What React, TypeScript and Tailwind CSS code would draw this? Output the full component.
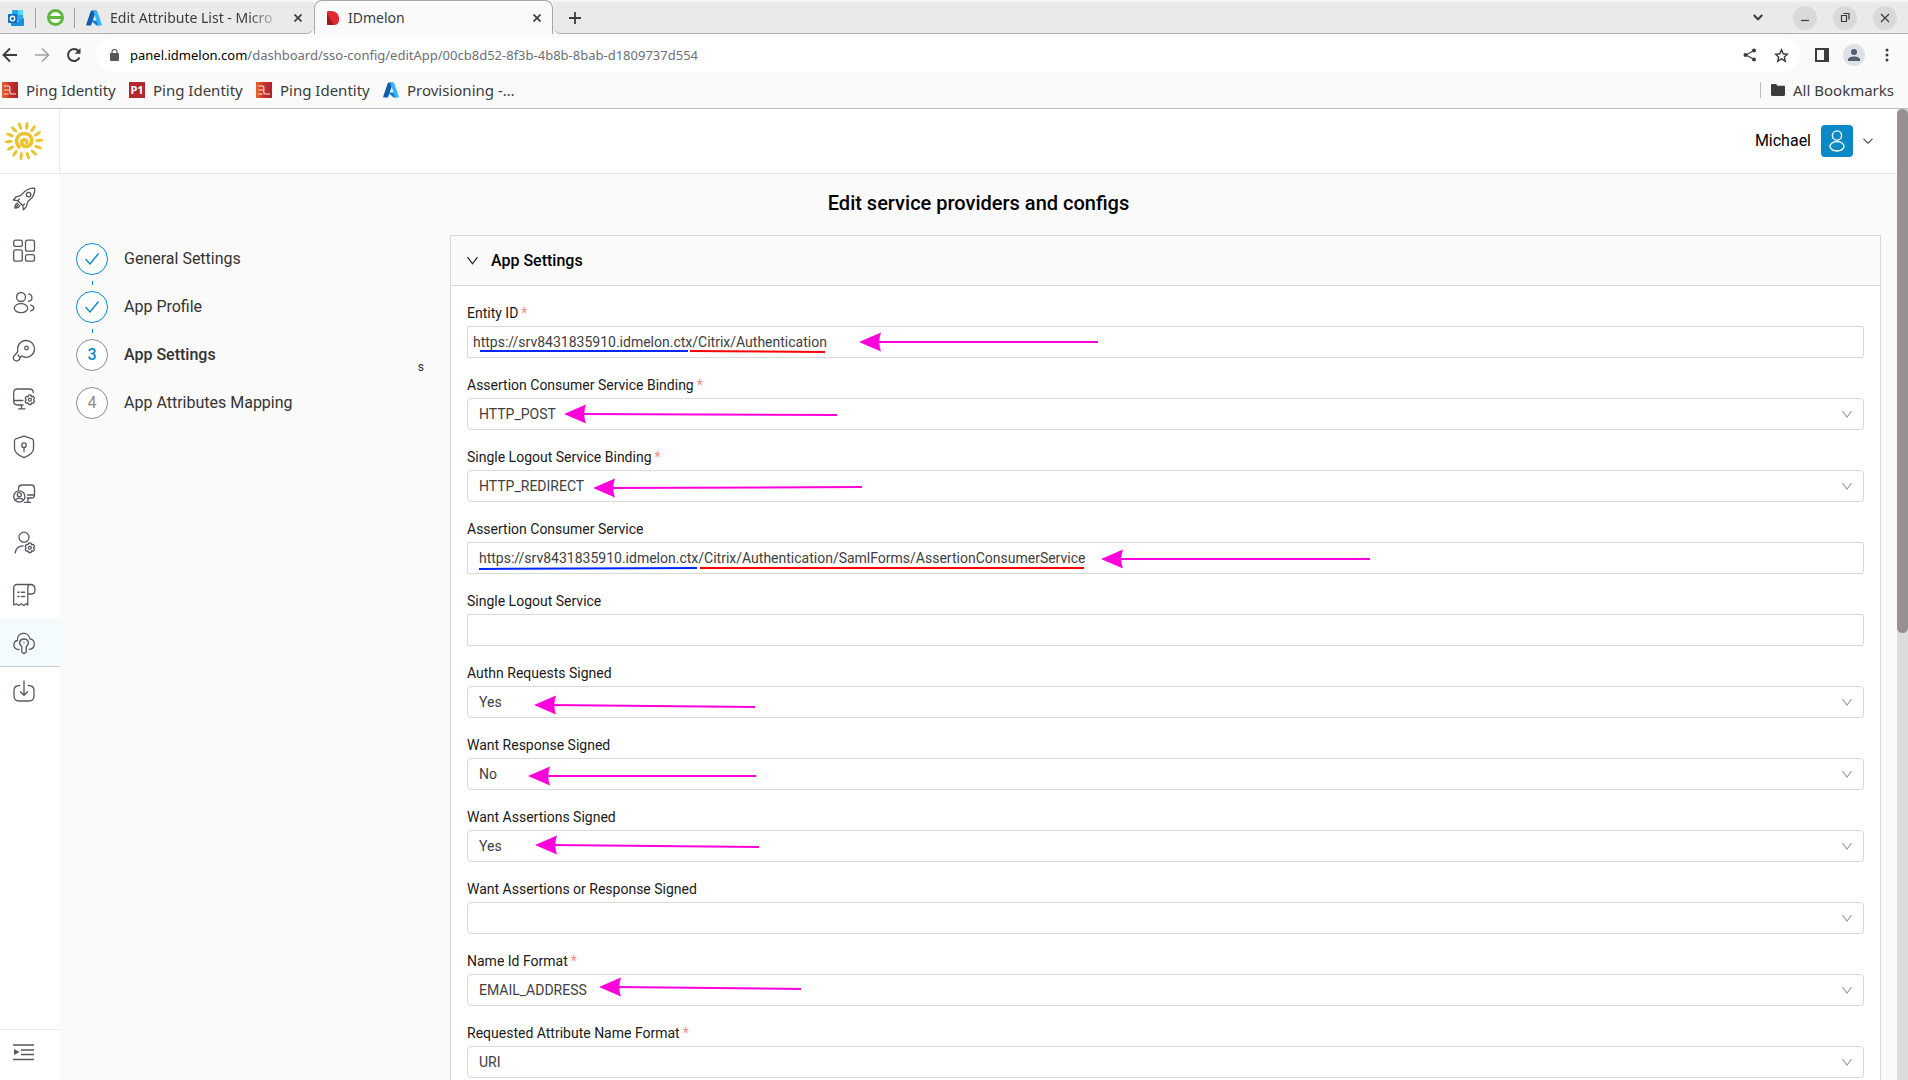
import React from "react";

type Line = { x1: number; y1: number; x2: number; y2: number; color: string };
type Arrow = { tip: number; tipY: number; end: number; endY: number };
type Field = {
  id: string;
  label: string;
  kind: "text" | "select";
  value: string;
  required?: boolean;
  pad?: string;
  arrow?: Arrow;
  lines?: Line[];
};

const BLUE = "#0026ff";
const RED = "#ff0000";

/* Annotation coordinates are measured from the top left corner of each field's box. */
const fields: Field[] = [
  {
    id: "entity-id",
    label: "Entity ID",
    kind: "text",
    value: "https://srv8431835910.idmelon.ctx/Citrix/Authentication",
    required: true,
    pad: "pl-[5px]",
    arrow: { tip: 392, tipY: 16, end: 631, endY: 16 },
    lines: [
      { x1: 13, y1: 25, x2: 221, y2: 25, color: BLUE },
      { x1: 223, y1: 25, x2: 358, y2: 26, color: RED },
    ],
  },
  {
    id: "acs-binding",
    label: "Assertion Consumer Service Binding",
    kind: "select",
    value: "HTTP_POST",
    required: true,
    arrow: { tip: 97, tipY: 16, end: 370, endY: 17 },
  },
  {
    id: "slo-binding",
    label: "Single Logout Service Binding",
    kind: "select",
    value: "HTTP_REDIRECT",
    required: true,
    arrow: { tip: 126, tipY: 18, end: 395, endY: 17 },
  },
  {
    id: "acs",
    label: "Assertion Consumer Service",
    kind: "text",
    value: "https://srv8431835910.idmelon.ctx/Citrix/Authentication/SamlForms/AssertionConsumerService",
    arrow: { tip: 634, tipY: 17, end: 903, endY: 17 },
    lines: [
      { x1: 12, y1: 27, x2: 230, y2: 26, color: BLUE },
      { x1: 233, y1: 26, x2: 617, y2: 26, color: RED },
    ],
  },
  { id: "slo", label: "Single Logout Service", kind: "text", value: "" },
  {
    id: "authn-signed",
    label: "Authn Requests Signed",
    kind: "select",
    value: "Yes",
    arrow: { tip: 67, tipY: 19, end: 288, endY: 21 },
  },
  {
    id: "response-signed",
    label: "Want Response Signed",
    kind: "select",
    value: "No",
    arrow: { tip: 61, tipY: 18, end: 289, endY: 18 },
  },
  {
    id: "assertions-signed",
    label: "Want Assertions Signed",
    kind: "select",
    value: "Yes",
    arrow: { tip: 68, tipY: 15, end: 292, endY: 17 },
  },
  { id: "either-signed", label: "Want Assertions or Response Signed", kind: "select", value: "" },
  {
    id: "name-id",
    label: "Name Id Format",
    kind: "select",
    value: "EMAIL_ADDRESS",
    required: true,
    arrow: { tip: 132, tipY: 13, end: 334, endY: 15 },
  },
  {
    id: "attr-format",
    label: "Requested Attribute Name Format",
    kind: "select",
    value: "URI",
    required: true,
  },
];

const GEAR =
  "M17.5 12 l1.5 .1 .6 1.6 1.7 -.3 1.2 1.9 -1 1.5 1 1.5 -1.2 1.9 -1.7 -.3 -.6 1.6 h-2.3 l-.7 -1.6 -1.7 .3 -1.1 -1.9 1 -1.5 -1 -1.5 1.1 -1.9 1.7 .3 .7 -1.6z";

function Icon({ children, size = 24 }: { children: React.ReactNode; size?: number }) {
  return (
    <svg
      width={size}
      height={size}
      viewBox="0 0 24 24"
      fill="none"
      stroke="currentColor"
      strokeWidth="1.3"
      strokeLinecap="round"
      strokeLinejoin="round"
      aria-hidden="true"
    >
      {children}
    </svg>
  );
}

const navItems: { name: string; gap?: boolean; active?: boolean; icon: React.ReactNode }[] = [
  {
    name: "Get started",
    gap: true,
    icon: (
      <>
        <path d="M22.7 1.2C17 1 13.500 3.200 10.500 6.700L9 8.400 4.200 9.800 1.300 13l4.400.7 5 4.800.8 4.300 2.800-3.200 1.600-5 2.200-2C21.500 9.600 23 6.200 22.700 1.200z" />
        <circle cx="16.600" cy="7.600" r="2.300" />
        <path d="M5.800 13.800l1.500-1.800M10.800 18.400l1.800-1.400M5.500 16.200c-1.700.6-2.500 2.200-2.600 4.800 2.500 0 4.300-.8 4.900-2.500M4.500 19.500l2-2" />
      </>
    ),
  },
  {
    name: "Dashboard",
    gap: true,
    icon: (
      <>
        <rect x="1.700" y="1.200" width="8.600" height="6.200" rx="2" />
        <rect x="13.500" y="1.200" width="9" height="11" rx="2" />
        <rect x="1.700" y="10.800" width="8.600" height="11.400" rx="2" />
        <rect x="13.500" y="15.600" width="9" height="6.600" rx="2" />
      </>
    ),
  },
  {
    name: "Users",
    icon: (
      <>
        <circle cx="9" cy="6" r="4.500" />
        <ellipse cx="9" cy="17.200" rx="6.700" ry="4.500" />
        <path d="M16.500 3.200c4.600.3 4.600 6.800 0 7M18.600 14.200c4.300.9 4.300 4.700 0 5.700" />
      </>
    ),
  },
  {
    name: "Keys",
    icon: (
      <>
        <path d="M5.800 12.500C4.600 6.500 8.500 1.500 14 1.500c5 0 8.500 3.800 8.500 8.200 0 5.500-5 9.800-10.700 8.300L10 16.800 8 18.500l-.5 2.200-3 1.500-2.700-1.500-.5-2.700z" />
        <circle cx="14.500" cy="9" r="1.800" />
        <path d="M6 16l2 2.300" />
      </>
    ),
  },
  {
    name: "Workstations",
    icon: (
      <>
        <path d="M11 18H5.500c-2.500 0-3.800-1.200-3.800-3.700V5.500C1.700 3 3 2 5.500 2h12c2.500 0 3.700 1 3.700 3.500M1.800 13.500h9M9.500 18v3.800M6.500 21.800h6.500" />
        <path d={GEAR} transform="translate(0 -4)" />
        <circle cx="17.900" cy="12.700" r="1.500" />
      </>
    ),
  },
  {
    name: "Security",
    icon: (
      <>
        <path d="M12 1.200l8.200 2.600c1 .5 1.300 1.300 1.300 2.500v7.200c0 4.200-5 7.300-9.500 9.100-4.500-1.800-9.500-4.900-9.500-9.100V6.300c0-1.200.4-2 1.300-2.500z" />
        <circle cx="12" cy="10.200" r="2.300" />
        <path d="M12 12.500v4" />
      </>
    ),
  },
  {
    name: "Sessions",
    icon: (
      <>
        <path d="M6.500 7V5.500C6.500 3 7.800 2 10 2h9.200c2.200 0 3.300 1 3.300 3.300v6.400c0 2.200-1.100 3.300-3.300 3.300H15M15.500 12h6.700M16 15v4M12.500 19.300h6" />
        <circle cx="7.300" cy="13.500" r="5.600" />
        <circle cx="7.300" cy="11.700" r="2" />
        <path d="M3.500 17.300c1-3 6.600-3 7.600 0" />
      </>
    ),
  },
  {
    name: "Administrators",
    gap: true,
    icon: (
      <>
        <circle cx="12" cy="6.200" r="5" />
        <path d="M3.200 21.800c.7-4.500 3.500-6.800 8-7" />
        <path d={GEAR} />
        <circle cx="17.900" cy="16.800" r="1.500" />
      </>
    ),
  },
  {
    name: "Logs",
    icon: (
      <>
        <path d="M19.500 1.500H5c-2.200 0-3.300 1.200-3.300 3.500v17l2.700-1.200 2.500 1.700 2.400-1.700 2.500 1.700 2.500-1.700 1.500 1.200V5c0-2.300 1-3.500 2.700-3.500 3 0 4.500 2 4.500 5.300 0 2.600-1 4.200-3.200 4.200h-4" />
        <path d="M6 9.300h1M9.500 9.300h3M6 13.500h1M9.500 13.500h3" strokeWidth="1.600" />
      </>
    ),
  },
  {
    name: "Single sign-on",
    active: true,
    icon: (
      <>
        <path d="M7 18.500C1 19.500 0 10 5.500 9.500 4.500 1 16.500-.5 18 8c5.800.2 6 10-.8 10.300" />
        <path d="M9.800 15.500c-4-2.500-2-7.500 2.200-7.500s6.200 5 2.200 7.500v5.500l-2.200 1.700-2.200-1.700z" />
        <path d="M12 11.500v.3" />
      </>
    ),
  },
  {
    name: "Downloads",
    icon: (
      <>
        <path d="M7.500 6.500C3.800 6.700 2 8.200 2 11.500V17c0 3.200 1.800 5 5 5h10c3.200 0 5-1.800 5-5v-5.500c0-3.300-1.800-4.800-5.500-5M12 2v14M8.500 12.700L12 16.200l3.500-3.500" />
      </>
    ),
  },
];

function SunLogo() {
  const rays = Array.from({ length: 14 }, (_, i) => i * (360 / 14) + 7);
  return (
    <svg width="40" height="40" viewBox="-20 -20 40 40" aria-hidden="true">
      {rays.map((angle) => (
        <ellipse key={angle} cx="1" cy="-15.200" rx="1.600" ry="4" fill="#edc42f" transform={`rotate(${angle})`} />
      ))}
      <path
        d="M-5 6C-10 0-6.500-7.500.5-7.500c5 0 7.800 3.800 7.300 7.800C7.300 4.500 3.200 6.300 0 5c-3.300-1.400-3.300-6 .3-6.300 2.200-.2 3 1.700 2.400 2.700"
        fill="none"
        stroke="#edc42f"
        strokeWidth="3.600"
        strokeLinecap="round"
      />
    </svg>
  );
}

function Azure() {
  return (
    <svg width="16" height="16" viewBox="0 0 16 16" aria-hidden="true">
      <path d="M5.700.5h4.500L5 15.500H1.200c-.8 0-1.200-.6-.9-1.300L4.800 1.100c.1-.4.5-.6.9-.6z" fill="#0f5fae" />
      <path d="M5 10.500h7l1.500 5h-3z" fill="#0c7cd5" />
      <path d="M6.300.5h4c.4 0 .8.200.9.600l4.500 13.100c.3.700-.2 1.300-.9 1.300h-4c.8 0 1.200-.6.900-1.300L7.200 1.100C7 .700 6.700.5 6.300.5z" fill="#35b6f2" />
    </svg>
  );
}

function Outlook() {
  return (
    <svg width="16" height="16" viewBox="0 0 16 16" aria-hidden="true">
      <rect x="4" width="11" height="11" rx="1" fill="#28a8ea" />
      <path d="M10 0h4a1 1 0 011 1v4h-5z" fill="#50d9ff" />
      <path d="M4 5h5v5H4z" fill="#0364b8" />
      <path d="M3 8l6.500 4L16 8v7a1 1 0 01-1 1H4a1 1 0 01-1-1z" fill="#1490df" />
      <rect y="4" width="9" height="9" rx="1" fill="#0f6cbd" />
      <circle cx="4.500" cy="8.500" r="2.200" fill="none" stroke="#fff" strokeWidth="1.400" />
    </svg>
  );
}

function Ping() {
  return (
    <svg width="16" height="16" viewBox="0 0 16 16" aria-hidden="true">
      <defs>
        <linearGradient id="ping" x1="0" x2="1">
          <stop offset="0" stopColor="#e9652b" />
          <stop offset=".5" stopColor="#c9302c" />
          <stop offset="1" stopColor="#a9262d" />
        </linearGradient>
      </defs>
      <path d="M0 0h16v16H0z" fill="url(#ping)" />
      <path d="M2 4h4.500c.8 0 1.300.5 1.300 1.300V10.500c0 1 .6 1.500 1.500 1.500H14M2.500 8H7M2 12h4.500" stroke="#fbe5df" strokeWidth="1.200" fill="none" />
    </svg>
  );
}

function PingOne() {
  return (
    <span className="flex size-4 items-center justify-center bg-[#b3282d] text-[11px] leading-4 font-bold text-white">P1</span>
  );
}

function Chevron({ className, size = 10 }: { className: string; size?: number }) {
  return (
    <svg className={className} width={size} height={size} viewBox="0 0 10 10" fill="none" stroke="currentColor" strokeWidth="1.100" aria-hidden="true">
      <path d="M.5 2L5 8l4.500-6" />
    </svg>
  );
}

function CloseX() {
  return (
    <svg width="8" height="8" viewBox="0 0 8 8" stroke="currentColor" strokeWidth="1.700" aria-hidden="true">
      <path d="M.5.5l7 7M7.500.5l-7 7" />
    </svg>
  );
}

function Browser() {
  return (
    <header className="shrink-0 bg-[#fafafa] font-['Noto_Sans','Open_Sans',sans-serif] text-[#3c3c3c]">
      <div className="flex h-[34px] items-stretch">
        <div className="flex w-[314px] items-center rounded-br-lg border-t-2 border-b border-t-[#f5f5f5] border-b-[#b0b0b0] bg-[#eaeaea] pl-2">
          <Outlook />
          <span className="ml-[11px] h-5 w-px bg-[#a0a0a0]" />
          <span className="ml-[11px] flex size-[17px] items-center justify-center rounded-full border-3 border-[#5fb63d] bg-white">
            <span className="h-[3px] w-full bg-[#5fb63d]" />
          </span>
          <span className="ml-[10px] h-5 w-px bg-[#a0a0a0]" />
          <button className="ml-[11px] flex min-w-0 items-center">
            <Azure />
            <span className="ml-2 w-[172px] [mask-image:linear-gradient(to_right,#000_80%,transparent)] text-left text-sm leading-5 whitespace-nowrap">
              Edit Attribute List - Micro
            </span>
          </button>
          <button aria-label="Close tab" className="ml-3">
            <CloseX />
          </button>
        </div>
        <div className="flex w-[239px] items-center rounded-t-lg border-x border-t border-[#a8a8a8] bg-[#fafafa] pl-3">
          <svg width="12" height="14" viewBox="0 0 12 14" aria-hidden="true">
            <path d="M0 1.500C0 .5.500 0 1.500 0H4c5 0 8 3 8 8s-2 6-6 6H1.500C.5 14 0 13.500 0 12.500z" fill="#df2b32" />
            <path d="M0 3l7 11H1.500C.5 14 0 13.500 0 12.500z" fill="#a31621" />
          </svg>
          <span className="ml-[9px] grow text-sm leading-5">IDmelon</span>
          <button aria-label="Close tab" className="mr-[11px]">
            <CloseX />
          </button>
        </div>
        <div className="flex grow items-center rounded-bl-lg border-t-2 border-b border-t-[#f5f5f5] border-b-[#b0b0b0] bg-[#eaeaea] pr-[11px] pl-4">
          <button aria-label="New tab">
            <svg width="12" height="12" viewBox="0 0 12 12" stroke="currentColor" strokeWidth="1.800" aria-hidden="true">
              <path d="M6 0v12M0 6h12" />
            </svg>
          </button>
          <button aria-label="Search tabs" className="mr-[30px] ml-auto">
            <svg width="10" height="7" viewBox="0 0 10 7" fill="none" stroke="currentColor" strokeWidth="2" aria-hidden="true">
              <path d="M.7 1L5 5.300 9.300 1" />
            </svg>
          </button>
          <div className="flex gap-4">
            {[
              { name: "Minimize", d: "M8 14.500h8" },
              { name: "Restore", d: "M8.500 9.500h5v6h-5zM10.500 7.500h5.500v6" },
              { name: "Close window", d: "M8 8l8 8M16 8l-8 8" },
            ].map((b) => (
              <button key={b.name} aria-label={b.name} className="size-6 rounded-full bg-[#d9d9d9]">
                <svg width="24" height="24" viewBox="0 0 24 24" fill="none" stroke="currentColor" strokeWidth="1.200" aria-hidden="true">
                  <path d={b.d} />
                </svg>
              </button>
            ))}
          </div>
        </div>
      </div>

      <div className="flex h-[38px] items-end pr-[18px] pl-[2px]">
        <div className="flex h-[34px] w-[94px] shrink-0 items-center">
          <button aria-label="Back">
            <svg width="16" height="16" viewBox="0 0 16 16" fill="none" stroke="currentColor" strokeWidth="1.900" aria-hidden="true">
              <path d="M15 8H2M8 1.500L1.500 8 8 14.500" />
            </svg>
          </button>
          <button aria-label="Forward" className="ml-4 text-[#a3a3a3]">
            <svg width="16" height="16" viewBox="0 0 16 16" fill="none" stroke="currentColor" strokeWidth="1.700" aria-hidden="true">
              <path d="M1 8h13M8 1.500L14.500 8 8 14.500" />
            </svg>
          </button>
          <button aria-label="Reload" className="ml-4">
            <svg width="16" height="16" viewBox="0 0 16 16" fill="none" stroke="currentColor" strokeWidth="2" aria-hidden="true">
              <path d="M13.500 10.500A6 6 0 1112.500 4" />
              <path d="M14.500 1v5.800H8.700z" fill="currentColor" stroke="none" />
            </svg>
          </button>
        </div>
        <div className="flex h-[34px] grow items-center rounded-full bg-white pr-[11px] pl-[14px]">
          <svg width="9" height="12" viewBox="0 0 9 12" aria-hidden="true">
            <rect y="4" width="9" height="8" rx="1" fill="#55595e" />
            <path d="M2 5V3a2.500 2.500 0 015 0v2" fill="none" stroke="#55595e" strokeWidth="1.200" />
          </svg>
          <a href="#" className="ml-[11px] text-[13px] leading-5 text-[#6b6f75]">
            <span className="text-black">panel.idmelon.com</span>/dashboard/sso-config/editApp/00cb8d52-8f3b-4b8b-8bab-d1809737d554
          </a>
          <button aria-label="Share" className="ml-auto">
            <svg width="14" height="14" viewBox="0 0 14 14" fill="currentColor" aria-hidden="true">
              <path d="M11 2.500L3 7l8 4.500" fill="none" stroke="currentColor" strokeWidth="1.200" />
              <circle cx="11" cy="2.500" r="2" />
              <circle cx="2.500" cy="7" r="2" />
              <circle cx="11" cy="11.500" r="2" />
            </svg>
          </button>
          <button aria-label="Bookmark this page" className="ml-[17px]">
            <svg width="15" height="15" viewBox="0 0 15 15" fill="none" stroke="currentColor" strokeWidth="1.400" aria-hidden="true">
              <path d="M7.500 1.800l1.700 4 4.300.400-3.200 2.800 1 4.200-3.800-2.300-3.800 2.300 1-4.200L1.500 6.200l4.300-.4z" />
            </svg>
          </button>
        </div>
        <div className="flex h-[34px] shrink-0 items-center pl-[15px]">
          <button aria-label="Side panel">
            <svg width="14" height="14" viewBox="0 0 14 14" aria-hidden="true">
              <rect x="1" y="1" width="12" height="12" fill="none" stroke="currentColor" strokeWidth="2" />
              <path d="M9 1h4v12H9z" fill="currentColor" />
            </svg>
          </button>
          <button aria-label="Profile" className="ml-[14px] flex size-[22px] items-center justify-center rounded-full bg-[#dee1e6]">
            <svg width="12" height="12" viewBox="0 0 12 12" fill="#535f75" aria-hidden="true">
              <circle cx="6" cy="3" r="3" />
              <path d="M0 12v-1.500C0 8.500 3 7.500 6 7.500s6 1 6 3V12z" />
            </svg>
          </button>
          <button aria-label="Menu" className="ml-[19px]">
            <svg width="6" height="14" viewBox="0 0 6 14" fill="currentColor" aria-hidden="true">
              <circle cx="3" cy="2" r="1.500" />
              <circle cx="3" cy="7" r="1.500" />
              <circle cx="3" cy="12" r="1.500" />
            </svg>
          </button>
        </div>
      </div>

      <nav aria-label="Bookmarks" className="flex h-[37px] items-center border-b border-[#bdbdbd] pr-[14px] pb-px pl-[2px] text-[15px] leading-5">
        <a href="#" className="flex w-[127px] items-center gap-2">
          <Ping />
          Ping Identity
        </a>
        <a href="#" className="flex w-[127px] items-center gap-2">
          <PingOne />
          Ping Identity
        </a>
        <a href="#" className="flex w-[127px] items-center gap-2">
          <Ping />
          Ping Identity
        </a>
        <a href="#" className="flex items-center gap-2">
          <Azure />
          Provisioning -…
        </a>
        <a href="#" className="ml-auto flex items-center">
          <span className="mr-[10px] h-4 w-px bg-[#bdbdbd]" />
          <svg width="14" height="12" viewBox="0 0 14 12" fill="currentColor" aria-hidden="true">
            <path d="M1.200 0H5l1.500 1.700h6.300c.7 0 1.200.5 1.200 1.200v7.900c0 .7-.5 1.200-1.200 1.200H1.200C.5 12 0 11.500 0 10.800V1.200C0 .5.500 0 1.200 0z" />
          </svg>
          <span className="ml-2">All Bookmarks</span>
        </a>
      </nav>
    </header>
  );
}

function Sidebar() {
  return (
    <aside className="flex w-[60px] shrink-0 flex-col bg-white text-[#55595e]">
      <a href="#" aria-label="Home" className="flex h-[65px] shrink-0 items-center border-r border-b border-[#ebebeb] pl-1">
        <SunLogo />
      </a>
      <nav aria-label="Main" className="flex flex-col pt-px">
        {navItems.map((item) => (
          <a
            key={item.name}
            href="#"
            aria-label={item.name}
            className={`flex h-12 items-center pl-3 ${item.gap ? "mb-1" : ""} ${item.active ? "border-b border-[#c9ced3] bg-[#f4fbff]" : ""}`}
          >
            <Icon>{item.icon}</Icon>
          </a>
        ))}
      </nav>
      <button aria-label="Expand menu" className="mt-auto flex h-[51px] shrink-0 items-start border-t border-[#ebebeb] pt-[14px] pl-[13px]">
        <svg width="21" height="17" viewBox="0 0 21 17" aria-hidden="true">
          <path d="M0 1h21M8 6h13M8 10.500h13M0 15.500h21" stroke="currentColor" strokeWidth="1.600" />
          <path d="M1 5l5.500 3L1 11z" fill="currentColor" />
        </svg>
      </button>
    </aside>
  );
}

const steps = [
  { n: 1, label: "General Settings", state: "done" },
  { n: 2, label: "App Profile", state: "done" },
  { n: 3, label: "App Settings", state: "current" },
  { n: 4, label: "App Attributes Mapping", state: "todo" },
];

function Steps() {
  return (
    <ol className="relative w-[390px] shrink-0 pt-2 pl-4">
      {steps.map((s, i) => (
        <li key={s.n} className="flex h-12 gap-4">
          <div className="flex flex-col items-center">
            <span
              className={`flex size-8 shrink-0 items-center justify-center rounded-full border bg-white text-base leading-6 ${
                s.state === "done"
                  ? "border-[#0a89c7] text-[#0a89c7]"
                  : s.state === "current"
                    ? "border-[#8c8c8c] font-medium text-[#0a89c7]"
                    : "border-[#8c8c8c] text-[#8c8c8c]"
              }`}
            >
              {s.state === "done" ? (
                <svg width="14" height="12" viewBox="0 0 14 12" fill="none" stroke="currentColor" strokeWidth="1.400" aria-label="Completed">
                  <path d="M.5 6L5 11 13.500.5" />
                </svg>
              ) : (
                s.n
              )}
            </span>
            {i < steps.length - 1 && (
              <span className={`mt-1.5 h-1 w-px ${s.state === "done" ? "bg-[#0a89c7]" : "bg-[#e8e8e8]"}`} />
            )}
          </div>
          <span className={`text-base leading-8 text-[#333333] ${s.state === "current" ? "font-medium" : ""}`}>{s.label}</span>
        </li>
      ))}
      <li aria-hidden="true" className="absolute top-[122px] right-[26px] text-xs leading-5 text-[#333333]">s</li>
    </ol>
  );
}

function Annotation({ arrow, lines }: { arrow?: Arrow; lines?: Line[] }) {
  return (
    <svg className="pointer-events-none absolute top-0 left-0 overflow-visible" width="920" height="32" aria-hidden="true">
      {lines?.map((l) => (
        <line key={l.x1} x1={l.x1} y1={l.y1} x2={l.x2} y2={l.y2} stroke={l.color} strokeWidth="2" />
      ))}
      {arrow && (
        <>
          <line x1={arrow.tip + 16} y1={arrow.tipY} x2={arrow.end} y2={arrow.endY} stroke="#ff00dc" strokeWidth="2" />
          <path
            d={`M${arrow.tip} ${arrow.tipY}l22 -9.500q-3.500 9.500 0 19z`}
            fill="#ff00dc"
          />
        </>
      )}
    </svg>
  );
}

function FormField({ field }: { field: Field }) {
  return (
    <div className="mb-4">
      <label htmlFor={field.id} className="block h-6 text-sm leading-[22px] text-[#1a1a1a]">
        {field.label}
        {field.required && <span className="ml-[3px] text-[#ff8587]">*</span>}
      </label>
      <div className="relative">
        {field.kind === "text" ? (
          <input
            id={field.id}
            type="text"
            defaultValue={field.value}
            className={`block h-8 w-full rounded-xs border border-[#d9d9d9] bg-white pr-3 text-sm text-[#404040] ${field.pad ?? "pl-[11px]"}`}
          />
        ) : (
          <>
            <select
              id={field.id}
              defaultValue={field.value}
              className="block h-8 w-full appearance-none rounded border border-[#d9d9d9] bg-white pr-8 pl-[11px] text-sm text-[#404040]"
            >
              <option>{field.value}</option>
            </select>
            <Chevron className="pointer-events-none absolute top-[11px] right-3 text-[#999999]" />
          </>
        )}
        {(field.arrow || field.lines) && <Annotation arrow={field.arrow} lines={field.lines} />}
      </div>
    </div>
  );
}

export default function App() {
  return (
    <div className="flex h-screen flex-col overflow-hidden bg-[#fafafa] font-[Roboto,sans-serif]">
      <Browser />
      <div className="flex min-h-0 grow">
        <Sidebar />
        <div className="flex min-w-0 grow flex-col overflow-hidden">
          <div className="flex h-[65px] shrink-0 items-center justify-end border-b border-[#e4e4e4] bg-white pr-6">
            <button className="flex items-center">
              <span className="text-base leading-6 text-black">Michael</span>
              <span className="ml-[10px] flex size-8 items-center justify-center rounded bg-[#0a89c7] text-white">
                <svg width="16" height="22" viewBox="0 0 16 22" fill="none" stroke="currentColor" strokeWidth="1.400" aria-hidden="true">
                  <circle cx="8" cy="5.500" r="4.600" />
                  <ellipse cx="8" cy="16.300" rx="7" ry="4.700" />
                </svg>
              </span>
              <svg className="ml-[10px] text-[#666666]" width="10" height="6" viewBox="0 0 10 6" fill="none" stroke="currentColor" strokeWidth="1.400" aria-hidden="true">
                <path d="M.5.700L5 5.200 9.500.700" />
              </svg>
            </button>
          </div>
          <main className="min-h-0 grow overflow-hidden">
            <h1 className="h-[61px] pt-[15px] text-center text-xl leading-7 font-medium text-black">
              Edit service providers and configs
            </h1>
            <div className="flex pr-4">
              <Steps />
              <section className="min-w-0 grow border border-[#d9d9d9] bg-white">
                <h2 className="border-b border-[#d9d9d9] bg-[#fafafa]">
                  <button className="flex h-[49px] w-full items-center gap-[13px] pl-4 text-base leading-6 font-medium text-black">
                    <Chevron className="text-[#222222]" size={11} />
                    App Settings
                  </button>
                </h2>
                <form className="px-4 pt-4">
                  {fields.map((f) => (
                    <FormField key={f.id} field={f} />
                  ))}
                </form>
              </section>
            </div>
          </main>
        </div>
        <div className="w-[11px] shrink-0 bg-[#c9c7c7]/60">
          <div className="h-[54%] rounded-full bg-[#969190]" />
        </div>
      </div>
    </div>
  );
}
